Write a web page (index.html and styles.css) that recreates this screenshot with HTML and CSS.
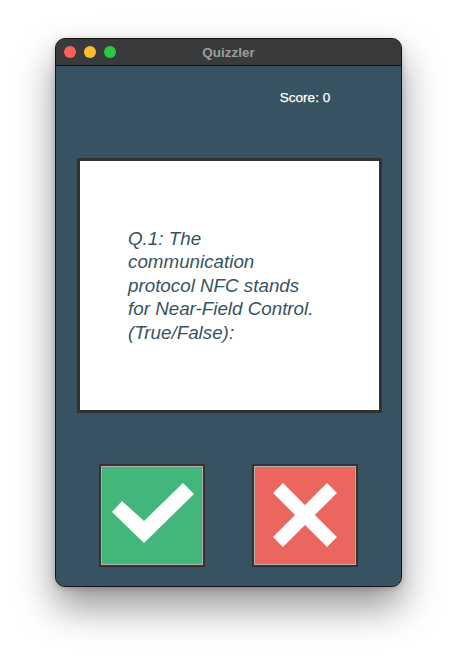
FILE: index.html
```html
<!DOCTYPE html>
<html lang="en">
<head>
<meta charset="utf-8">
<title>Quizzler</title>
<link rel="stylesheet" href="styles.css">
</head>
<body>
<div class="window">
  <div class="titlebar">
    <div class="lights">
      <span class="light red"></span>
      <span class="light yellow"></span>
      <span class="light green"></span>
    </div>
    <div class="title">Quizzler</div>
    <div></div>
  </div>
  <div class="content">
    <div class="score-row">
      <div class="score">Score: 0</div>
    </div>
    <div class="card">
      <p class="question">Q.1: The communication protocol NFC stands for Near-Field Control. (True/False):</p>
    </div>
    <div class="buttons">
      <button class="answer true" aria-label="True">
        <svg viewBox="0 0 102 99" width="102" height="99">
          <polygon points="11,46 21,35 43,55 82,17 93,28 43,77" fill="#fff"/>
        </svg>
      </button>
      <button class="answer false" aria-label="False">
        <svg viewBox="0 0 102 99" width="102" height="99">
          <line x1="24" y1="22" x2="78" y2="76" stroke="#fff" stroke-width="14"/>
          <line x1="78" y1="22" x2="24" y2="76" stroke="#fff" stroke-width="14"/>
        </svg>
      </button>
    </div>
  </div>
</div>
</body>
</html>
```
FILE: styles.css
```css
html, body {
  margin: 0;
  padding: 0;
  background: #ffffff;
}

body {
  font-family: "Liberation Sans", Arial, sans-serif;
  padding-top: 38px;
  padding-left: 55px;
  height: 661px;
  box-sizing: border-box;
}

.window {
  width: 347px;
  height: 549px;
  box-sizing: border-box;
  border: 1px solid #151515;
  border-radius: 10px;
  overflow: hidden;
  box-shadow: 0 20px 38px rgba(0, 0, 0, 0.42), 0 2px 6px rgba(0, 0, 0, 0.2);
  display: flex;
  flex-direction: column;
  background: #375362;
}

.titlebar {
  height: 26px;
  flex: none;
  background: #383a3b;
  border-bottom: 1px solid #0e0e0e;
  display: grid;
  grid-template-columns: 1fr auto 1fr;
  align-items: center;
}

.lights {
  display: flex;
  gap: 8px;
  padding-left: 8px;
}

.light {
  width: 12px;
  height: 12px;
  border-radius: 50%;
  display: block;
}

.light.red { background: #fe5f57; }
.light.yellow { background: #febc2e; }
.light.green { background: #2ac840; }

.title {
  color: #9c9c9c;
  font-weight: bold;
  font-size: 13.5px;
}

.content {
  flex: 1;
  background: #375362;
  padding: 24px 0 0 21px;
}

.score-row {
  display: flex;
  padding-left: 175px;
  height: 16px;
}

.score {
  width: 106px;
  color: #ffffff;
  font-size: 13.5px;
  line-height: 16px;
  text-align: center;
  -webkit-text-stroke: 0.25px #ffffff;
}

.card {
  margin-top: 52px;
  width: 305px;
  height: 255px;
  box-sizing: border-box;
  border: 3px solid #323232;
  background: #ffffff;
  display: flex;
  align-items: center;
  padding-left: 48px;
}

.question {
  margin: 0;
  width: 192px;
  font-style: italic;
  font-size: 18.8px;
  line-height: 23.6px;
  color: #375362;
}

.buttons {
  margin-top: 51px;
  display: flex;
  gap: 47px;
  padding-left: 22px;
}

.answer {
  width: 106px;
  height: 103px;
  flex: none;
  box-sizing: border-box;
  border: 2px solid #333333;
  padding: 0;
  margin: 0;
  box-shadow: inset 0 0 0 1px #b2b2b2;
  display: block;
  cursor: pointer;
}

.answer svg {
  display: block;
}

.answer.true { background: #43b77b; }
.answer.false { background: #ea665f; }
```
